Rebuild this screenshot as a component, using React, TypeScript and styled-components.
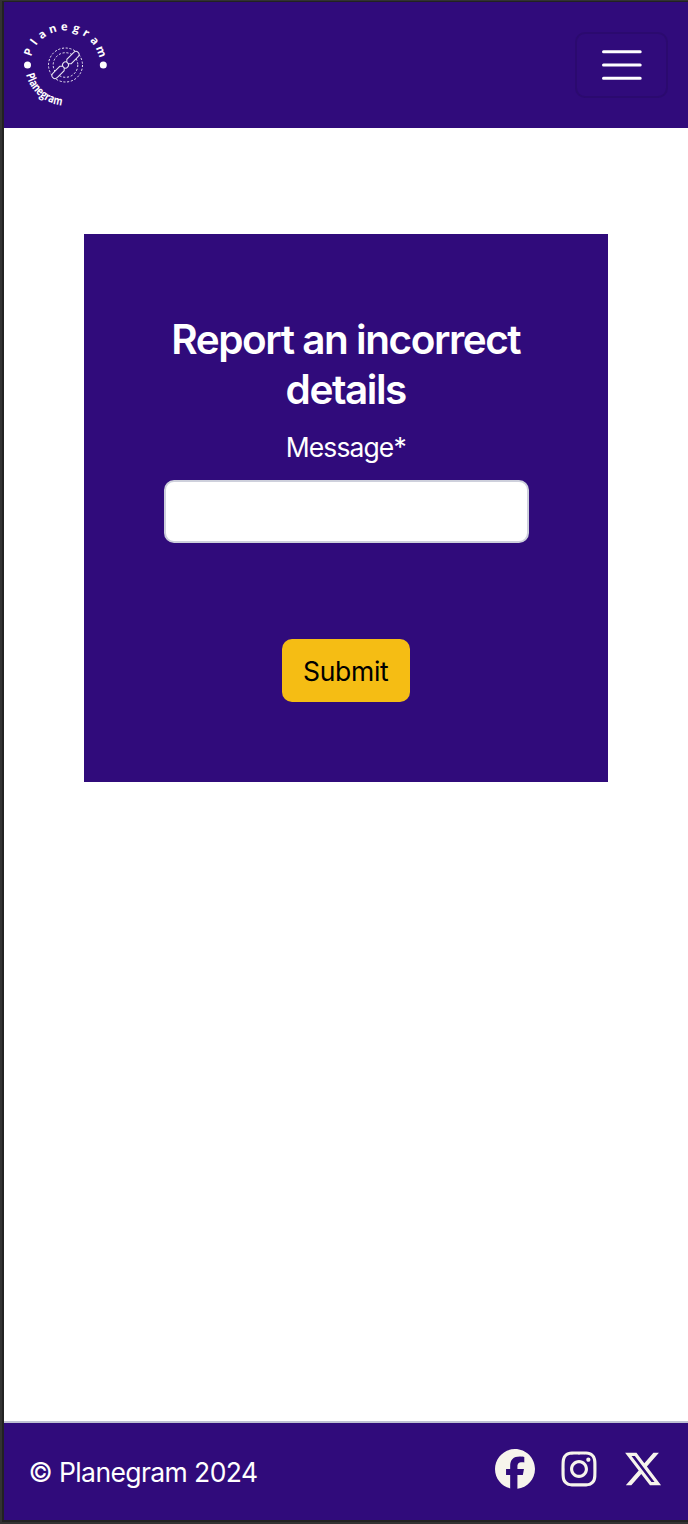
import React from "react";
import styled, { createGlobalStyle } from "styled-components";
import { FaFacebook, FaInstagram, FaXTwitter } from "react-icons/fa6";

const GlobalStyle = createGlobalStyle`
  *, *::before, *::after { box-sizing: border-box; }
  body {
    margin: 0;
    background: #333;
    font-family: Inter, "Liberation Sans", sans-serif;
    font-size: 26.5px;
  }
`;

const Frame = styled.div`
  height: 1524px;
  padding: 1px 0 2px 2px;
`;

const Page = styled.div`
  display: flex;
  flex-direction: column;
  height: 100%;
  border: solid #222;
  border-width: 1px 0 2px 2px;
  background: #fff;
`;

const Header = styled.header`
  display: flex;
  align-items: center;
  justify-content: space-between;
  flex: none;
  height: 126px;
  padding: 0 20px 0 18px;
  background: #300b7b;
`;

const LogoSvg = styled.svg`
  display: block;
  width: 86px;
  height: 86px;
  overflow: visible;
  fill: #fff;
  font-family: "Open Sans", "Liberation Sans", sans-serif;
  font-weight: 700;
`;

const Toggler = styled.button`
  display: flex;
  align-items: center;
  justify-content: center;
  width: 93px;
  height: 66px;
  padding: 0;
  border: 2px solid #2b0a6f;
  border-radius: 10px;
  background: transparent;
`;

const Main = styled.main`
  flex: 1;
  padding: 106px 80px 0 79.5px;
`;

const Card = styled.form`
  display: flex;
  flex-direction: column;
  align-items: center;
  height: 548px;
  padding: 80px;
  background: #300b7b;
  color: #fff;
`;

const Title = styled.h1`
  margin: 0;
  padding-top: 1px;
  font-size: 40.5px;
  font-weight: 600;
  line-height: 50px;
  letter-spacing: -1.45px;
  text-align: center;
`;

const Label = styled.label`
  margin-top: 12px;
  line-height: 40px;
  font-weight: 440;
  letter-spacing: -0.9px;
`;

const Input = styled.input`
  width: 365px;
  height: 63px;
  margin: 13px 0 0 0.5px;
  padding: 10px 20px;
  border: 2px solid #ced0dc;
  border-radius: 10px;
  background: #fff;
  font: inherit;
  outline: none;
`;

const Submit = styled.button`
  width: 128px;
  height: 63px;
  margin-top: 96px;
  padding: 0;
  border: 0;
  border-radius: 10px;
  background: #f5bd14;
  color: #000;
  font: inherit;
  letter-spacing: -0.3px;
`;

const Footer = styled.footer`
  display: flex;
  align-items: center;
  justify-content: space-between;
  flex: none;
  height: 99px;
  padding: 0 25.5px 0 24.5px;
  border-top: 2px solid #bfc2d3;
  background: #300b7b;
  color: #fff;
`;

const Copyright = styled.span`
  font-weight: 430;
  letter-spacing: -0.6px;
`;

const Social = styled.nav`
  display: flex;
  gap: 24px;
  padding-bottom: 5px;
  color: #f7f4ec;
  font-size: 40px;

  svg { display: block; }
`;

/* Angle from the vertical and half advance width of each letter of the upper arc. */
const ARC_ANGLES = [-70, -53, -36.5, -18.5, -1, 17, 33, 50, 69];
const ARC_HALF_WIDTHS = [3.5, 1.7, 3.4, 3.7, 3.3, 3.2, 2.6, 3.4, 5.5];
const ARC_RADIUS = 35;

const arcLetters = ARC_ANGLES.map((angle, i) => {
  const t = (angle * Math.PI) / 180;
  const half = ARC_HALF_WIDTHS[i];
  return {
    x: 65 + ARC_RADIUS * Math.sin(t) - half * Math.cos(t),
    y: 65.5 - ARC_RADIUS * Math.cos(t) - half * Math.sin(t),
  };
});

const Logo = () => (
  <LogoSvg viewBox="22 22 86 86" role="img" aria-label="Planegram">
    <defs>
      <path id="lowerArc" d="M26.1 74.5 A40.5 40.5 0 0 0 63.5 105.4" />
    </defs>
    <text
      fontSize="11.3"
      x={arcLetters.map((l) => l.x.toFixed(2)).join(" ")}
      y={arcLetters.map((l) => l.y.toFixed(2)).join(" ")}
      rotate={ARC_ANGLES.join(" ")}
    >
      Planegram
    </text>
    <text fontSize="11.8">
      <textPath href="#lowerArc" textLength="50" lengthAdjust="spacingAndGlyphs">Planegram</textPath>
    </text>
    <circle cx="27.5" cy="65" r="3.5" />
    <circle cx="103.3" cy="65" r="3.5" />
    <g fill="none" stroke="#fff" strokeOpacity="0.9">
      <circle cx="65.5" cy="65" r="17" strokeWidth="1" strokeDasharray="2.1 1.7" />
      <circle cx="65.5" cy="65" r="12.3" strokeWidth="1" strokeDasharray="2.1 1.8" />
      <g strokeWidth="1" transform="rotate(-45 65.5 65)" fill="#300b7b">
        <path d="M68.3 64 L70.5 61.9 H80 Q83.4 61.9 83.4 65 Q83.4 68.1 80 68.1 H70.5 L68.3 66" />
        <path d="M62.7 64 L60.5 61.9 H51 Q47.6 61.9 47.6 65 Q47.6 68.1 51 68.1 H60.5 L62.7 66" />
        <circle cx="65.5" cy="65" r="3" />
      </g>
    </g>
  </LogoSvg>
);

const MenuIcon = () => (
  <svg width="40" height="32" viewBox="0 0 40 32" stroke="#fff" strokeWidth="3" strokeLinecap="round">
    <path d="M1.5 2.8H38.2M1.5 16H38.2M1.5 29.3H38.2" />
  </svg>
);

export default function App() {
  return (
    <>
      <GlobalStyle />
      <Frame>
        <Page>
          <Header>
            <Logo />
            <Toggler type="button" aria-label="Toggle navigation">
              <MenuIcon />
            </Toggler>
          </Header>
          <Main>
            <Card onSubmit={(e) => e.preventDefault()}>
              <Title>Report an incorrect<br />details</Title>
              <Label htmlFor="message">Message*</Label>
              <Input id="message" type="text" required />
              <Submit type="submit">Submit</Submit>
            </Card>
          </Main>
          <Footer>
            <Copyright>© Planegram 2024</Copyright>
            <Social>
              <FaFacebook />
              <FaInstagram />
              <FaXTwitter />
            </Social>
          </Footer>
        </Page>
      </Frame>
    </>
  );
}
